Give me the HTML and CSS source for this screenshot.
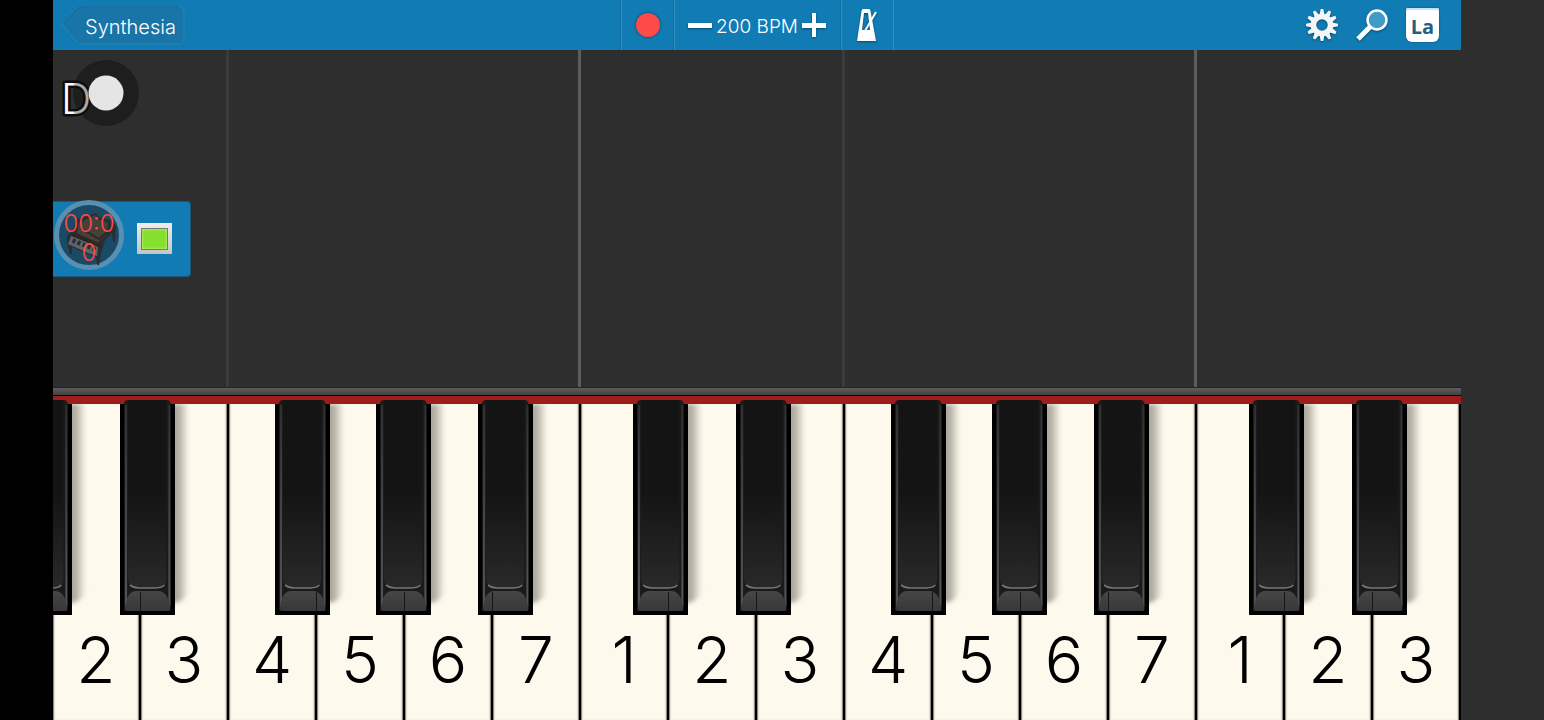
FILE: index.html
```html
<!DOCTYPE html>
<html lang="en">
<head>
<meta charset="utf-8">
<meta name="viewport" content="width=device-width, initial-scale=1">
<title>Synthesia</title>
<link rel="stylesheet" href="styles.css">
</head>
<body>
<svg class="defs" width="0" height="0" aria-hidden="true">
  <defs>
    <linearGradient id="body" x1="0" y1="0" x2="0" y2="1"><stop offset="0" stop-color="#141414"/><stop offset=".5" stop-color="#141414"/><stop offset="1" stop-color="#292929"/></linearGradient>
    <linearGradient id="side" x1="0" y1="0" x2="0" y2="1"><stop offset="0" stop-color="#303030"/><stop offset="1" stop-color="#555"/></linearGradient>
    <linearGradient id="lip" x1="0" y1="0" x2="0" y2="1"><stop offset="0" stop-color="#464646"/><stop offset="1" stop-color="#383838"/></linearGradient>
    <linearGradient id="note" x1="0" y1="0" x2="1" y2="0"><stop offset=".38" stop-color="#fff"/><stop offset=".5" stop-color="#aaa"/></linearGradient>
    <symbol id="ebony" viewBox="0 0 55 215" preserveAspectRatio="none">
      <path d="M0 4H55V215H0Z" fill="#000"/>
      <path d="M4 4Q4 0 8 0H46Q50 0 50 4V211H4Z" fill="#1a1a1a"/>
      <path d="M5 5H7V207H5ZM48 5H50V207H48Z" fill="url(#side)"/>
      <path d="M8 0H46V180Q45 188 36 188H18Q9 188 8 180Z" fill="url(#body)"/>
      <path d="M10 185Q13 188 19 188H35Q42 188 44 185" fill="none" stroke="#777" stroke-width="1.500"/>
      <path d="M5 210Q6 191 16 191H38Q48 191 50 210L48 211H7Z" fill="url(#lip)"/>
    </symbol>
  </defs>
</svg>
<div class="app">
  <header class="toolbar">
    <button class="back" type="button">
      <svg class="back-shape" viewBox="0 0 124 38" preserveAspectRatio="none" aria-hidden="true"><path d="M1 18 15 3Q18 1 21 1H118Q123 1 123 6V31Q123 36 118 36H21Q18 36 15 33Z" fill="#1975a8" stroke="#2584b5" stroke-width="1"/><path d="M2 17 16 3Q18 1 21 1H118" fill="none" stroke="#176795"/></svg>
      <span class="back-label">Synthesia</span>
    </button>
    <div class="transport">
      <button class="cell record" type="button" aria-label="Record"><span class="dot"></span></button>
      <div class="cell tempo">
        <button class="step" type="button" aria-label="Slower"><svg width="24" height="24"><path d="M0 10H24V15H0Z" fill="#fff"/></svg></button>
        <span class="bpm">200 BPM</span>
        <button class="step" type="button" aria-label="Faster"><svg width="24" height="24"><path d="M0 10H10V0H14V10H24V15H14V24H10V15H0Z" fill="#fff"/></svg></button>
      </div>
      <button class="cell metronome" type="button" aria-label="Metronome"><svg class="icon" width="24" height="34" viewBox="0 0 24 34"><path fill-rule="evenodd" d="M8 1H14Q15 1 15.500 3L21 33H2L6.500 3Q7 1 8 1ZM9 5 7 22H15L13 5Z" fill="#fff"/><path d="M10 23 21 4" stroke="#fff" stroke-width="2"/></svg></button>
    </div>
    <nav class="tools">
      <button class="tool" type="button" aria-label="Settings"><svg class="icon" width="32" height="32" viewBox="-16 -16 32 32"><circle r="8.500" fill="none" stroke="#f5f5f5" stroke-width="5.500"/><g fill="#f5f5f5"><path id="t" d="M-2.500-10-1.300-16H1.300L2.500-10ZM-2.500 10-1.300 16H1.300L2.500 10Z"/><use href="#t" transform="rotate(30)"/><use href="#t" transform="rotate(60)"/><use href="#t" transform="rotate(90)"/><use href="#t" transform="rotate(120)"/><use href="#t" transform="rotate(150)"/></g></svg></button>
      <button class="tool" type="button" aria-label="Zoom"><svg class="icon" width="34" height="34" viewBox="0 0 34 34"><path d="M3 31 16 18" stroke="#fff" stroke-width="5"/><circle cx="22" cy="12" r="9.500" fill="#409bc9" stroke="#fff" stroke-width="2.500"/></svg></button>
      <button class="tool" type="button"><span class="names">La</span></button>
    </nav>
  </header>
  <main class="roll">
    <div class="lane faint"></div><div class="lane strong"></div><div class="lane faint"></div><div class="lane strong"></div><div class="lane"></div>
    <svg class="stick" width="90" height="80" viewBox="0 0 90 80">
      <circle cx="53" cy="43" r="33" fill="#1e1e1e"/>
      <text class="stick-note" x="8" y="64" fill="url(#note)">D</text>
      <circle cx="53" cy="43" r="17.500" fill="#e5e5e5"/>
    </svg>
    <section class="panel">
      <button class="timer" type="button">
        <svg class="piano" viewBox="0 0 60 60" aria-hidden="true"><path d="M8 30 13 25 18 13 37 7 40 11 52 14 57 20 56 36H54L53 27 46 34 42 48 40 59H38L37 51 28 48 13 41V48H11L8 37Z" fill="#2b2d30"/><path d="M20 17 36 9 39 13 49 17 47 29 38 37 18 27Z" fill="#45413a"/><path d="M22 22 40 33 48 26" stroke="#2b2927" stroke-width="2" fill="none"/><path d="M12 29 16 27 42 38 40 42Z" fill="#2b2723"/><path d="M12 30 39 41 38 50 29 47 9 38Z" fill="#5c656b"/><path d="M16 33 14 37M21 35 19 39M26 37 24 41M31 39 29 43M36 41 34 45" stroke="#2b2e31" stroke-width="3"/></svg>
        <span class="time">00:0<br>0</span>
      </button>
      <button class="light" type="button" aria-label="Indicator"><span class="lamp"></span></button>
    </section>
  </main>
  <div class="rail"></div>
  <div class="keyboard">
    <div class="key"><button class="white">2</button><button class="black b1" aria-label="Sharp 1"><svg><use href="#ebony"/></svg></button></div>
    <div class="key"><button class="white">3</button><button class="black b2" aria-label="Sharp 2"><svg><use href="#ebony"/></svg></button></div>
    <div class="key"><button class="white">4</button></div>
    <div class="key"><button class="white">5</button><button class="black b4" aria-label="Sharp 4"><svg><use href="#ebony"/></svg></button></div>
    <div class="key"><button class="white">6</button><button class="black b5" aria-label="Sharp 5"><svg><use href="#ebony"/></svg></button></div>
    <div class="key"><button class="white">7</button><button class="black b6" aria-label="Sharp 6"><svg><use href="#ebony"/></svg></button></div>
    <div class="key"><button class="white">1</button></div>
    <div class="key"><button class="white">2</button><button class="black b1" aria-label="Sharp 1"><svg><use href="#ebony"/></svg></button></div>
    <div class="key"><button class="white">3</button><button class="black b2" aria-label="Sharp 2"><svg><use href="#ebony"/></svg></button></div>
    <div class="key"><button class="white">4</button></div>
    <div class="key"><button class="white">5</button><button class="black b4" aria-label="Sharp 4"><svg><use href="#ebony"/></svg></button></div>
    <div class="key"><button class="white">6</button><button class="black b5" aria-label="Sharp 5"><svg><use href="#ebony"/></svg></button></div>
    <div class="key"><button class="white">7</button><button class="black b6" aria-label="Sharp 6"><svg><use href="#ebony"/></svg></button></div>
    <div class="key"><button class="white">1</button></div>
    <div class="key"><button class="white">2</button><button class="black b1" aria-label="Sharp 1"><svg><use href="#ebony"/></svg></button></div>
    <div class="key"><button class="white">3</button><button class="black b2" aria-label="Sharp 2"><svg><use href="#ebony"/></svg></button></div>
  </div>
</div>
</body>
</html>
```

FILE: styles.css
```css
* { box-sizing: border-box; }

body {
  margin: 0;
  padding: 0 83px 0 53px;
  background: linear-gradient(to right, #000 53px, #2e2e2e 53px);
  font-family: Inter, "Liberation Sans", sans-serif;
  font-weight: 300;
}

button {
  margin: 0;
  padding: 0;
  border: 0;
  background: none;
  color: inherit;
  font: inherit;
}

svg { display: block; }
.defs { position: absolute; }

.app {
  display: flex;
  flex-direction: column;
  min-height: 100vh;
}

/* Toolbar */
.toolbar {
  display: grid;
  grid-template-columns: 1fr auto 1fr;
  height: 50px;
  background: #117cb3;
  color: #fff;
}

.back {
  display: grid;
  align-self: center;
  justify-self: start;
  width: 124px;
  height: 38px;
  margin-left: 8px;
}

.back-shape, .back-label { grid-area: 1 / 1; }
.back-shape { width: 100%; height: 100%; }

.back-label {
  position: relative;
  padding: 2px 0 0 15px;
  font-size: 20px;
  line-height: 38px;
}

.transport { display: flex; }

.cell {
  display: flex;
  align-items: center;
  justify-content: center;
  width: 53px;
  border-left: 1px solid #3190c0;
  box-shadow: -1px 0 #0f6fa1;
}

.cell:last-child { border-right: 1px solid #3190c0; }

.tempo {
  justify-content: space-between;
  width: 167px;
  padding: 0 14px 0 13px;
}

.bpm {
  padding-top: 4px;
  font-size: 19px;
  line-height: 24px;
  white-space: nowrap;
}

.dot {
  width: 24px;
  height: 24px;
  border-radius: 50%;
  background: #ff4a4a;
  box-shadow: 0 0 3px #123c58;
}

.step svg, .icon { filter: drop-shadow(0 1px 1px #07486f); }

.tools {
  display: flex;
  align-items: center;
  justify-content: flex-end;
  gap: 17px;
  padding-right: 22px;
}

.names {
  display: block;
  width: 33px;
  height: 34px;
  border-radius: 2px 2px 6px 6px;
  background: #fff;
  box-shadow: 0 0 2px #07486f, inset 0 2px 1px #bfe4f5;
  color: #245f80;
  font: 700 20px/38px "Open Sans", sans-serif;
}

/* Note roll */
.roll {
  position: relative;
  display: grid;
  flex: 1;
  grid-template-columns: 2fr 4fr 3fr 4fr 3fr;
  background: #2e2e2e;
}

.faint { border-right: 3px solid #3b3b3b; }
.strong { border-right: 3px solid #5c5c5c; }

.stick {
  position: absolute;
  top: 0;
  left: 0;
}

.stick-note {
  font-size: 42px;
  font-weight: 350;
  stroke: #0c0c0c;
  stroke-width: 5px;
  stroke-linejoin: round;
  paint-order: stroke;
}

.panel {
  position: absolute;
  top: 151px;
  left: 0;
  display: flex;
  align-items: center;
  gap: 13px;
  padding: 0 18px 6px 1px;
  border: 1px solid #1e5878;
  border-left: 0;
  border-radius: 0 4px 4px 0;
  background: #117cb3;
}

.timer {
  display: grid;
  place-items: center;
  width: 70px;
  height: 70px;
  margin-top: -2px;
  border: 5px solid #5990b1;
  border-radius: 50%;
  background: #1b4a66;
}

.piano, .time { grid-area: 1 / 1; }
.piano { width: 60px; height: 60px; }

.time {
  position: relative;
  padding-top: 4px;
  color: #ff4a40;
  font-size: 24px;
  font-weight: 350;
  line-height: 29px;
}

.light {
  width: 35px;
  height: 31px;
  margin-top: 5px;
  padding: 4px;
  background: linear-gradient(#eee, #c4c4c4);
}

.lamp {
  display: block;
  height: 22px;
  border: 1px solid #777;
  background: #85df2c;
  box-shadow: inset 0 0 3px #c8f79a;
}

/* Keyboard */
.rail {
  height: 9px;
  border-top: 1px solid #222;
  border-bottom: 1px solid #000;
  background: linear-gradient(#5e5e5e, #404040);
}

.keyboard {
  display: grid;
  grid-template-columns: repeat(16, 1fr);
  height: 45vh;
  padding-top: 8px;
  overflow: hidden;
  background: #9d1d1d;
}

.key { position: relative; }

.white {
  display: flex;
  align-items: flex-end;
  justify-content: center;
  width: 100%;
  height: 100%;
  padding-bottom: 28px;
  border-right: 2px solid #000;
  background: #fef9ed;
  box-shadow: inset 1px 0 #8d8b84, inset -1px 0 #8d8b84, inset 2px 0 1px #e2ded2, inset -2px 0 1px #e2ded2;
  color: #000;
  font-size: 64px;
  font-weight: 350;
  line-height: 64px;
}

.black {
  position: absolute;
  z-index: 1;
  top: -4px;
  width: 63%;
  height: 68%;
}

.black svg {
  position: relative;
  width: 100%;
  height: 100%;
}

.black::before {
  content: "";
  position: absolute;
  top: 4px;
  bottom: 12px;
  left: 90%;
  width: 34%;
  background: linear-gradient(to right, #aba89d 40%, #aba89d00);
  border-radius: 0 0 16px;
  filter: blur(2px);
  clip-path: inset(0 -8px -8px 0);
}

/* Seam between the two white keys, seen through the front lip */
.black::after {
  content: "";
  position: absolute;
  bottom: 3px;
  left: var(--seam);
  width: 1px;
  height: 20px;
  background: #151515;
}

.b1 { left: -41%; --seam: 63%; }
.b2 { left: -24%; --seam: 36%; }
.b4 { left: -48%; --seam: 74%; }
.b5 { left: -33%; --seam: 50%; }
.b6 { left: -17%; --seam: 25%; }
```
